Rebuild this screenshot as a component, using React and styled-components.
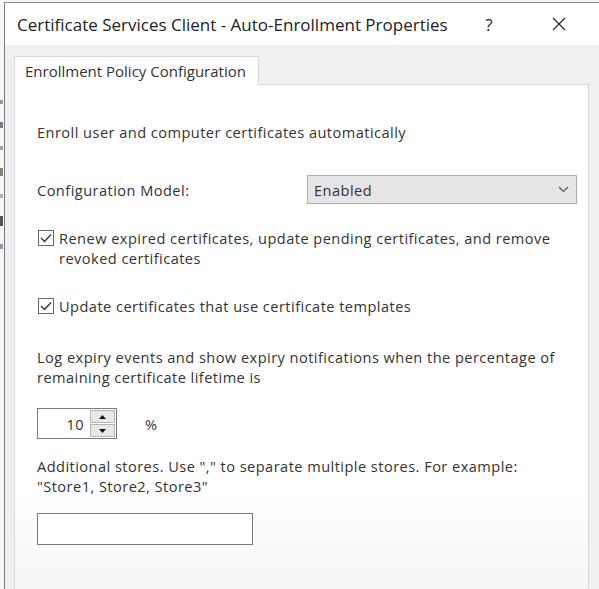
import styled, { createGlobalStyle } from "styled-components"

const GlobalStyle = createGlobalStyle`
  html, body {
    margin: 0;
    padding: 0;
    background: #f3f3f3;
  }
  body {
    font-family: "Open Sans", "Noto Sans", "Liberation Sans", sans-serif;
    color: #333;
  }
`

const Screen = styled.div`
  display: flex;
  width: 599px;
  height: 589px;
  overflow: hidden;
`

const BackWindow = styled.div`
  width: 4px;
  padding-top: 100px;
  display: flex;
  flex-direction: column;
  gap: 18px;
  background: #f7f7f7;
`

const BackMark = styled.div`
  width: 3px;
  height: ${(p) => p.h || 6}px;
  background: ${(p) => p.c || "#9aa4ae"};
`

const Dialog = styled.div`
  flex: 1;
  display: flex;
  flex-direction: column;
  margin-top: 2px;
  border-left: 1px solid #7a7a7a;
  border-top: 1px solid #8a8a8a;
  background: #f0f0f0;
`

const TitleBar = styled.div`
  height: 42px;
  display: flex;
  align-items: center;
  background: #fff;
  padding-left: 12px;
`

const Title = styled.div`
  flex: 1;
  font-size: 17px;
  color: #222;
  white-space: nowrap;
`

const TitleButton = styled.div`
  width: ${(p) => p.w}px;
  display: flex;
  justify-content: center;
  align-items: center;
  font-size: 17px;
  color: #222;
`

const Body = styled.div`
  flex: 1;
  display: flex;
  flex-direction: column;
  padding: 11px 10px 0 9px;
`

const Tabs = styled.div`
  display: flex;
`

const Tab = styled.div`
  height: 28px;
  padding: 0 12px 0 10px;
  display: flex;
  align-items: center;
  background: #fff;
  border: 1px solid #d9d9d9;
  border-bottom: none;
  font-size: 15px;
  color: #333;
  position: relative;
  z-index: 1;
  margin-bottom: -1px;
`

const Panel = styled.div`
  flex: 1;
  background: linear-gradient(#fff 80%, #f7f7f7);
  border: 1px solid #d9d9d9;
  border-bottom: none;
  padding: 0 0 0 22px;
  font-size: 14.6px;
  line-height: 20px;
  letter-spacing: 0.45px;
`

const Text = styled.div`
  margin-top: ${(p) => p.mt || 0}px;
  padding-right: 16px;
  white-space: nowrap;
`

const Row = styled.div`
  display: flex;
  align-items: center;
  margin-top: ${(p) => p.mt || 0}px;
`

const Label = styled.div`
  width: 270px;
`

const Select = styled.div`
  width: 270px;
  height: 29px;
  display: flex;
  align-items: center;
  justify-content: space-between;
  padding: 0 7px 0 6px;
  box-sizing: border-box;
  background: #e5e5e5;
  border: 1px solid #adadad;
`

const Check = styled.div`
  display: flex;
  align-items: flex-start;
  gap: 5px;
  margin-top: ${(p) => p.mt || 0}px;
  margin-left: 1px;
  white-space: nowrap;
`

const Box = styled.div`
  flex: none;
  width: 16px;
  height: 16px;
  margin-top: 2px;
  box-sizing: border-box;
  border: 1px solid #666;
  background: #fff;
  display: flex;
  align-items: center;
  justify-content: center;
`

const Spinner = styled.div`
  width: 80px;
  height: 31px;
  display: flex;
  box-sizing: border-box;
  border: 1px solid #7a7a7a;
  background: #fff;
`

const SpinValue = styled.div`
  flex: 1;
  display: flex;
  align-items: center;
  justify-content: flex-end;
  padding-right: 6px;
`

const SpinButtons = styled.div`
  width: 25px;
  display: flex;
  flex-direction: column;
  gap: 1px;
  padding: 1px 1px 1px 0;
`

const SpinButton = styled.div`
  flex: 1;
  display: flex;
  align-items: center;
  justify-content: center;
  background: #e8e8e8;
  border: 1px solid #b5b5b5;
`

const Percent = styled.div`
  margin-left: 28px;
`

const Input = styled.div`
  width: 216px;
  height: 32px;
  box-sizing: border-box;
  border: 1px solid #7a7a7a;
  background: #fff;
  margin-top: ${(p) => p.mt || 0}px;
`

const CheckMark = () => (
  <svg width="12" height="10" viewBox="0 0 12 10">
    <path d="M1 5 L4.5 8.5 L11 1.5" fill="none" stroke="#333" strokeWidth="1.3" />
  </svg>
)

const Arrow = ({ up }) => (
  <svg width="7" height="4" viewBox="0 0 7 4">
    <path d={up ? "M0 4 L3.5 0 L7 4 Z" : "M0 0 L3.5 4 L7 0 Z"} fill="#111" />
  </svg>
)

export default function App() {
  return (
    <Screen>
      <GlobalStyle />
      <BackWindow>
        <BackMark c="#8d9aa8" h={4} />
        <BackMark c="#6f7d8c" h={6} />
        <BackMark c="#9aa5b0" h={4} />
        <BackMark c="#7b8a6a" h={8} />
        <BackMark c="#aab3bb" h={4} />
        <BackMark c="#555" h={10} />
        <BackMark c="#8d9aa8" h={5} />
      </BackWindow>
      <Dialog>
        <TitleBar>
          <Title>Certificate Services Client - Auto-Enrollment Properties</Title>
          <TitleButton w={60}>?</TitleButton>
          <TitleButton w={80}>
            <svg width="14" height="14" viewBox="0 0 14 14">
              <path d="M1 1 L13 13 M13 1 L1 13" stroke="#222" strokeWidth="1.1" />
            </svg>
          </TitleButton>
        </TitleBar>
        <Body>
          <Tabs>
            <Tab>Enrollment Policy Configuration</Tab>
          </Tabs>
          <Panel>
            <Text mt={37}>Enroll user and computer certificates automatically</Text>
            <Row mt={33}>
              <Label>Configuration Model:</Label>
              <Select>
                <span>Enabled</span>
                <svg width="11" height="7" viewBox="0 0 11 7">
                  <path d="M1 1 L5.5 5.5 L10 1" fill="none" stroke="#555" strokeWidth="1.1" />
                </svg>
              </Select>
            </Row>
            <Check mt={24}>
              <Box><CheckMark /></Box>
              <div>
                Renew expired certificates, update pending certificates, and remove
                <br />
                revoked certificates
              </div>
            </Check>
            <Check mt={28}>
              <Box><CheckMark /></Box>
              <div>Update certificates that use certificate templates</div>
            </Check>
            <Text mt={31}>
              Log expiry events and show expiry notifications when the percentage of
              <br />
              remaining certificate lifetime is
            </Text>
            <Row mt={21}>
              <Spinner>
                <SpinValue>10</SpinValue>
                <SpinButtons>
                  <SpinButton><Arrow up /></SpinButton>
                  <SpinButton><Arrow /></SpinButton>
                </SpinButtons>
              </Spinner>
              <Percent>%</Percent>
            </Row>
            <Text mt={17}>
              Additional stores. Use "," to separate multiple stores. For example:
              <br />
              "Store1, Store2, Store3"
            </Text>
            <Input mt={17} />
          </Panel>
        </Body>
      </Dialog>
    </Screen>
  )
}
